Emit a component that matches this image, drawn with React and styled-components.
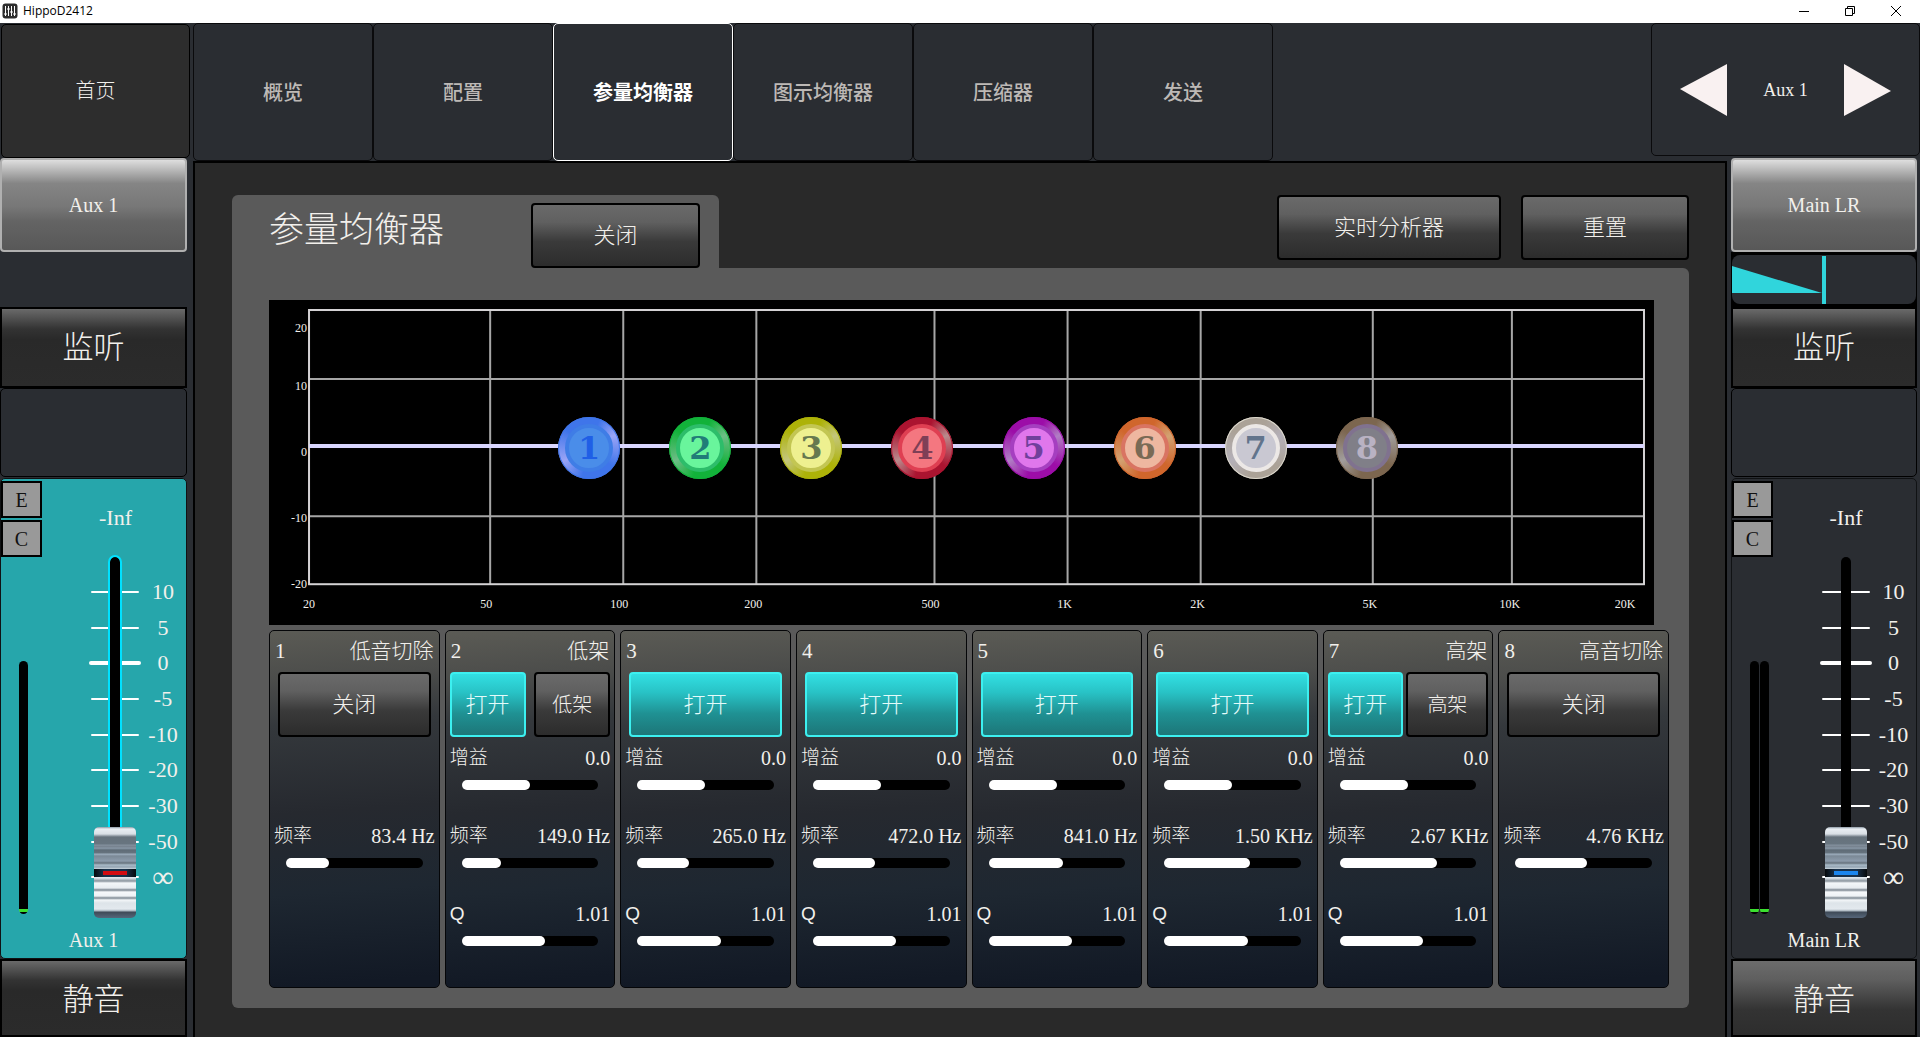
import React, { useState } from "react";
import styled, { createGlobalStyle, css } from "styled-components";

const GlobalStyle = createGlobalStyle`
  *, *::before, *::after { box-sizing: border-box; }
  body {
    margin: 0;
    background: #2a2d32;
    color: #f2f0ec;
    font-family: "Liberation Serif", "Noto Sans CJK SC", serif;
    font-size: 20px;
    font-weight: 300;
    line-height: 24px;
  }
  button, input {
    margin: 0;
    padding: 0;
    color: inherit;
    font: inherit;
  }
`;

const BODY_TEXT = "20px";

/* ---------- window frame ---------- */

const Window = styled.div`
  display: flex;
  flex-direction: column;
  min-height: 100vh;
`;

const TitleBar = styled.header`
  display: flex;
  align-items: center;
  height: 23px;
  padding: 0 7px 2px 2px;
  background: #fff;
  color: #000;
`;

const WindowTitle = styled.h1`
  flex: 1;
  margin: 0 0 0 5px;
  font: 400 12px/16px "Open Sans", "Noto Sans", sans-serif;
`;

const WindowButton = styled.button`
  display: grid;
  place-items: center;
  width: 34px;
  height: 20px;
  margin-left: 12px;
  border: 0;
  background: none;
`;

const Console = styled.div`
  flex: 1;
  display: grid;
  grid-template-columns: 193px minmax(0, 1fr) 76px 193px;
  grid-template-rows: 135px 3px 1fr;
`;

/* ---------- buttons ---------- */

const faces = {
  dark: css`
    border-color: #000;
    background: linear-gradient(#6a6a6a, #606060 28%, #3a3a3a 60%, #2c2c2c);
  `,
  on: css`
    border-color: #3cf0f0;
    background: linear-gradient(#32dfe2, #28c3c6 30%, #1f9193 65%, #1d7678);
    color: #e4fbfa;
  `,
  strip: css`
    border-color: #000;
    border-radius: 0;
    background: linear-gradient(#6a6a6a, #333 26%, #292929 40%, #2b2b2b);
  `,
  stripLit: css`
    border-color: #000;
    border-radius: 0;
    background: linear-gradient(#6c6c6c, #5e5e5e 26%, #333 66%, #2d2d2d);
  `,
  channel: css`
    border-color: #b0b0b0;
    background: linear-gradient(#dedede, #bcbcbc 10%, #858585 26%, #777 52%, #646464 68%, #585858);
  `,
};

const PushButton = styled.button`
  width: ${(p) => p.$width || "auto"};
  height: ${(p) => p.$height || "65px"};
  padding-top: ${(p) => p.$drop || "0"};
  border: 2px solid;
  border-radius: 4px;
  font-size: ${(p) => p.$size || "22px"};
  line-height: 32px;
  ${(p) => faces[p.$face || "dark"]}
`;

/* ---------- top bar ---------- */

const HomeButton = styled.button`
  width: 189px;
  height: 134px;
  margin: 1px 0 0 1px;
  border: 1px solid #000;
  border-radius: 5px;
  background: #2d2d2d;
  font-size: ${BODY_TEXT};
`;

const Tabs = styled.nav`
  grid-area: 1 / 2 / 3 / 3;
  display: flex;
`;

const Tab = styled.button`
  width: 180px;
  height: 138px;
  padding-top: 2px;
  border: 1px solid ${(p) => (p.$active ? "#fff" : "#0a0a0c")};
  border-radius: 5px;
  background: #2a2d32;
  color: ${(p) => (p.$active ? "#fff" : "#bdb9b6")};
  font-size: ${BODY_TEXT};
  font-weight: ${(p) => (p.$active ? 700 : 500)};
`;

const Pager = styled.div`
  grid-area: 1 / 3 / 2 / 5;
  display: flex;
  align-items: center;
  justify-content: space-between;
  height: 133px;
  padding: 0 28px;
  border: 1px solid #0a0a0c;
  border-radius: 5px;
  font-size: 18px;
`;

const PagerButton = styled.button`
  width: 48px;
  height: 54px;
  border: 0;
  background: none;

  svg { display: block; }
`;

/* ---------- channel strips ---------- */

const LeftColumn = styled.aside`
  grid-area: 1 / 1 / 4 / 2;
  display: flex;
  flex-direction: column;
  padding-right: 6px;
`;

const RightColumn = styled.aside`
  grid-area: 2 / 4 / 4 / 5;
  display: flex;
  flex-direction: column;
  padding: 0 3px 0 4px;
`;

const Slot = styled.div`
  height: 55px;
`;

const PanBox = styled.div`
  height: 55px;
  padding: 3px 1px;
  background: #000;

  svg {
    display: block;
    width: 100%;
    height: 49px;
    border-radius: 8px;
    background: #2a2d32;
  }
`;

const EmptyBox = styled.div`
  height: 89px;
  margin-bottom: 1px;
  border: 1px solid #000;
  border-radius: 5px;
`;

const FaderPanel = styled.section`
  flex: 1;
  display: flex;
  flex-direction: column;
  border: 1px solid #101214;
  border-radius: 5px;
  background: ${(p) => (p.$active ? "#26a6ab" : "#2a2d32")};
`;

const FaderHead = styled.div`
  display: grid;
  grid-template-columns: 41px 1fr;
  align-items: center;
  height: 76px;
`;

const Flags = styled.div`
  display: grid;
  gap: 2px;
  padding-top: 2px;
`;

const Flag = styled.button`
  width: 41px;
  height: 37px;
  border: 2px solid #000;
  background: #999;
  color: #111;
  font-size: ${BODY_TEXT};
`;

const Level = styled.output`
  padding-left: 3px;
  text-align: center;
  font-size: 22px;
`;

const FaderBody = styled.div`
  display: grid;
  grid-template-columns: 87px 54px 1fr;
  height: 363px;
`;

const Meters = styled.div`
  grid-area: 1 / 1;
  display: flex;
  gap: 1px;
  align-self: end;
  height: 253px;
  margin: 0 0 4px 18px;
`;

const Meter = styled.div`
  width: 9px;
  border-radius: 5px;
  background: linear-gradient(#000 248px, #3bdf2f 248px, #3bdf2f 251px, #000 251px);
`;

const Track = styled.div`
  grid-area: 1 / 2;
  justify-self: center;
  width: 14px;
  height: 340px;
  border: 2px solid ${(p) => (p.$active ? "#00e1ff" : "transparent")};
  border-radius: 7px;
  background: #000;
  background-clip: padding-box;
`;

const Scale = styled.ul`
  grid-area: 1 / 2 / 2 / 4;
  display: flex;
  flex-direction: column;
  height: 321px;
  margin: 19px 0 0;
  padding: 0;
  list-style: none;
`;

const ScaleMark = styled.li`
  flex: 1;
  display: grid;
  grid-template-columns: 54px 1fr;
  align-items: center;
  text-align: center;

  &::before {
    content: "";
    justify-self: center;
    width: ${(p) => (p.$strong ? "52px" : "48px")};
    height: ${(p) => (p.$strong ? "4px" : "2px")};
    border-radius: 2px;
    background: #fff;
  }
`;

const ScaleText = styled.span`
  padding-right: 2px;
  font-size: ${(p) => (p.$big ? "30px" : "22px")};
`;

const FaderInput = styled.input`
  grid-area: 1 / 2;
  justify-self: center;
  appearance: none;
  writing-mode: vertical-lr;
  direction: rtl;
  width: 42px;
  height: 363px;
  background: none;

  &::-webkit-slider-runnable-track {
    width: 42px;
    height: 100%;
    background: none;
  }

  &::-webkit-slider-thumb {
    appearance: none;
    width: 42px;
    height: 91px;
    border-radius: 5px;
    background:
      linear-gradient(${(p) => p.$lamp}, ${(p) => p.$lamp}) 50% 44px / 24px 4px no-repeat,
      linear-gradient(90deg, #06090c, #19324c 25%, #19324c 75%, #06090c) 0 42px / 100% 8px no-repeat,
      linear-gradient(
        #8d99a5 0, #e9eef3 2px, #d9dfe5 7px, #8b959f 9px,
        #66727c 10px, #687580 17px, #84919e 18px, #74808c 20px,
        #8d9cab 21px, #5f6c77 23px, #66737e 26px, #9fb0bf 27px,
        #7b8996 29px, #8c9bab 34px, #66727d 36px, #a9bac8 38px,
        #93a3b2 40px, #c9d4dd 42px, #dfe6ec 51px, #8a949d 54px,
        #f4f7f9 56px, #e7ecf0 61px, #7b858f 63px, #f6f8fa 65px,
        #eef2f5 69px, #7d8892 71px, #f3f6f8 73px, #dde4e9 76px,
        #e3e9ee 82px, #a7b2bc 84px, #3f4a57 85px, #56667a 91px
      );
  }
`;

const StripName = styled.div`
  padding-top: 10px;
  text-align: center;
  font-size: ${BODY_TEXT};
`;

/* ---------- equalizer page ---------- */

const Main = styled.main`
  grid-area: 3 / 2 / 4 / 4;
  display: flex;
  flex-direction: column;
  padding: 32px 36px 29px 37px;
  border: 2px solid #000;
  border-bottom: 0;
  background: #292929;
`;

const MainHead = styled.div`
  display: flex;
  justify-content: space-between;
  height: 73px;
`;

const TitleTab = styled.div`
  display: flex;
  align-items: flex-end;
  justify-content: space-between;
  width: 487px;
  padding: 0 19px 0 37px;
  border-radius: 6px 6px 0 0;
  background: #5a5a5a;
`;

const PageTitle = styled.h2`
  align-self: center;
  margin: 0;
  padding-bottom: 2px;
  font-size: 35px;
  font-weight: 300;
  line-height: 48px;
`;

const Actions = styled.div`
  display: flex;
  gap: 20px;
`;

const Panel = styled.div`
  flex: 1;
  display: flex;
  flex-direction: column;
  gap: 5px;
  padding: 32px 20px 20px 37px;
  border-radius: 0 6px 6px 6px;
  background: #5a5a5a;
`;

const ChartBox = styled.div`
  position: relative;
  margin-right: 15px;
  background: #000;

  svg {
    display: block;
    width: 100%;
    height: auto;
  }

  text {
    fill: #f2f0ec;
    font-size: 12px;
  }
`;

const BandDot = styled.button`
  position: absolute;
  left: ${(p) => p.$left}%;
  top: 148px;
  width: 62px;
  height: 62px;
  transform: translate(-50%, -50%);
  display: grid;
  place-items: center;
  border: 0;
  border-radius: 50%;
  background: conic-gradient(
    from 20deg,
    ${(p) => p.$rim}, ${(p) => p.$shine} 12%, ${(p) => p.$rim} 30%,
    ${(p) => p.$rim} 48%, ${(p) => p.$shine} 62%, ${(p) => p.$rim} 80%
  );
  box-shadow: inset 0 0 0 1px ${(p) => p.$edge || p.$rim};
`;

const DotFace = styled.span`
  display: grid;
  place-items: center;
  width: 48px;
  height: 48px;
  border: 4px solid ${(p) => p.$ring};
  border-radius: 50%;
  background: ${(p) => p.$face};
  color: ${(p) => p.$ink};
  font: 700 32px/40px "DejaVu Serif", serif;
`;

const Bands = styled.div`
  flex: 1;
  display: grid;
  grid-template-columns: repeat(8, minmax(0, 1fr));
  gap: 5px;
`;

const BandCard = styled.section`
  display: flex;
  flex-direction: column;
  border: 1px solid #050608;
  border-radius: 5px;
  background: linear-gradient(176deg, #5b5b55, #4c4d4b 13%, #34383c 26%, #26292f 50%, #1e2731 72%, #121925 97%);
`;

const BandHead = styled.div`
  display: flex;
  justify-content: space-between;
  padding: 7px 5px 0;
  font-size: 21px;
  line-height: 26px;
`;

const BandButtons = styled.div`
  display: grid;
  grid-template-columns: ${(p) => p.$columns};
  justify-content: space-between;
  margin: 8px ${(p) => (p.$wide ? "8px" : "4px")} 9px;
`;

const Field = styled.div`
  display: grid;
  grid-template-columns: auto 1fr;
  height: 78px;
  padding: 0 4px;
  align-content: start;
  line-height: 24px;
`;

const FieldLabel = styled.label`
  font-size: 19px;
  font-family: ${(p) => (p.$sans ? '"Liberation Sans", sans-serif' : "inherit")};
`;

const FieldValue = styled.output`
  text-align: right;
  font-size: ${BODY_TEXT};
`;

const Range = styled.input`
  grid-column: 1 / 3;
  appearance: none;
  height: 10px;
  margin: 10px 12px 0;
  border-radius: 5px;
  background:
    linear-gradient(#fff, #fff) 0 0 / var(--fill) 100% no-repeat,
    #000;

  &::-webkit-slider-thumb {
    appearance: none;
    width: 10px;
    height: 10px;
    border-radius: 50%;
    background: #fff;
  }
`;

/* ---------- data ---------- */

const TABS = ["概览", "配置", "参量均衡器", "图示均衡器", "压缩器", "发送"];

const MARKS = ["10", "5", "0", "-5", "-10", "-20", "-30", "-50", "∞"];

const BANDS = [
  { kind: "低音切除", on: false, freq: "83.4 Hz", pos: 26 },
  { kind: "低架", on: true, shelf: "低架", columns: "76px 76px", gain: 46, freq: "149.0 Hz", pos: 23, q: 58 },
  { on: true, gain: 46, freq: "265.0 Hz", pos: 33, q: 58 },
  { on: true, gain: 46, freq: "472.0 Hz", pos: 41, q: 58 },
  { on: true, gain: 46, freq: "841.0 Hz", pos: 51, q: 58 },
  { on: true, gain: 46, freq: "1.50 KHz", pos: 60, q: 58 },
  { kind: "高架", on: true, shelf: "高架", columns: "75px 82px", gain: 46, freq: "2.67 KHz", pos: 69, q: 58 },
  { kind: "高音切除", on: false, freq: "4.76 KHz", pos: 49 },
];

const DOTS = [
  { rim: "#3f75ea", shine: "#9aa4f6", ring: "#3f7de6", face: "#4a8de9", ink: "#1f5fe6" },
  { rim: "#12b23a", shine: "#6dbd86", ring: "#2dbd6a", face: "#69f59c", ink: "#217c78" },
  { rim: "#adb208", shine: "#c4c67c", ring: "#c3c653", face: "#eef090", ink: "#66794f" },
  { rim: "#ab1430", shine: "#b98a8c", ring: "#df3f52", face: "#f47780", ink: "#7e3f56" },
  { rim: "#9c0da8", shine: "#b07fc4", ring: "#a53fc0", face: "#e077ec", ink: "#70409c" },
  { rim: "#d0662c", shine: "#d3a272", ring: "#d97462", face: "#eeb7a0", ink: "#7a6a55" },
  { rim: "#aba297", shine: "#b4b0b8", ring: "#ece8e6", face: "#c9c8d2", ink: "#62748c", edge: "#dcd8cc" },
  { rim: "#7c664f", shine: "#a19d9c", ring: "#80728f", face: "#807f88", ink: "#b9b2c3" },
];

const GRID_X = [221, 354, 487, 665, 798, 931, 1103, 1242];
const FREQ_LABELS = [
  [40, "20"], [217, "50"], [350, "100"], [484, "200"], [661, "500"],
  [795, "1K"], [928, "2K"], [1100, "5K"], [1240, "10K"], [1355, "20K"],
];
const DB_LABELS = [[32, "20"], [90, "10"], [156, "0"], [222, "-10"], [288, "-20"]];

/* ---------- parts ---------- */

function AppIcon() {
  return (
    <svg width="16" height="16" viewBox="0 0 16 16" aria-hidden="true">
      <rect x="0.5" y="0.5" width="15" height="15" rx="3" fill="#2d2d2d" />
      <path d="M3.5 3v10M6.5 3v10M9.5 3v10M12.5 3v10" stroke="#fff" strokeWidth="1" />
      <path d="M2.5 11h2M5.5 6h2M8.5 9h2M11.5 11h2" stroke="#fff" strokeWidth="2" />
    </svg>
  );
}

function Fader({ name, active, lamp, meters }) {
  const [level, setLevel] = useState(0);
  return (
    <FaderPanel $active={active} aria-label={name}>
      <FaderHead>
        <Flags>
          <Flag type="button">E</Flag>
          <Flag type="button">C</Flag>
        </Flags>
        <Level>-Inf</Level>
      </FaderHead>
      <FaderBody>
        <Meters>
          {Array.from({ length: meters }, (_, i) => <Meter key={i} />)}
        </Meters>
        <Scale>
          {MARKS.map((mark) => (
            <ScaleMark key={mark} $strong={mark === "0"}>
              <ScaleText $big={mark === "∞"}>{mark}</ScaleText>
            </ScaleMark>
          ))}
        </Scale>
        <Track $active={active} />
        <FaderInput
          type="range"
          aria-label={name}
          $lamp={lamp}
          value={level}
          onChange={(e) => setLevel(Number(e.target.value))}
        />
      </FaderBody>
      <StripName>{name}</StripName>
    </FaderPanel>
  );
}

function SliderField({ id, label, text, start, sans }) {
  const [value, setValue] = useState(start);
  const fill = { "--fill": `calc((100% - 10px) * ${value / 100} + 5px)` };
  return (
    <Field>
      <FieldLabel htmlFor={id} $sans={sans}>{label}</FieldLabel>
      <FieldValue htmlFor={id}>{text}</FieldValue>
      <Range id={id} type="range" value={value} style={fill} onChange={(e) => setValue(Number(e.target.value))} />
    </Field>
  );
}

function Band({ number, band }) {
  const full = band.gain !== undefined;
  return (
    <BandCard>
      <BandHead>
        <span>{number}</span>
        <span>{band.kind}</span>
      </BandHead>
      <BandButtons $wide={!band.shelf} $columns={band.columns || "1fr"}>
        <PushButton type="button" $face={band.on ? "on" : "dark"}>{band.on ? "打开" : "关闭"}</PushButton>
        {band.shelf && <PushButton type="button" $size="20px">{band.shelf}</PushButton>}
      </BandButtons>
      {full ? <SliderField id={`gain-${number}`} label="增益" text="0.0" start={band.gain} /> : <Field />}
      <SliderField id={`freq-${number}`} label="频率" text={band.freq} start={band.pos} />
      {full && <SliderField id={`q-${number}`} label="Q" text="1.01" start={band.q} sans />}
    </BandCard>
  );
}

function Chart() {
  return (
    <ChartBox>
      <svg viewBox="0 0 1384 325" role="img" aria-label="参量均衡器">
        <g stroke="#a6a6a6" strokeWidth="2">
          {GRID_X.map((x) => <path key={x} d={`M${x} 10V284`} />)}
          <path d="M40 79H1374M40 216H1374" />
        </g>
        <rect x="40" y="10" width="1334" height="274" fill="none" stroke="#d4d2d4" strokeWidth="2" />
        <path d="M40 146H1374" stroke="#d9d6ff" strokeWidth="4" />
        {DB_LABELS.map(([y, label]) => (
          <text key={label} x="38" y={y} textAnchor="end">{label}</text>
        ))}
        {FREQ_LABELS.map(([x, label]) => (
          <text key={label} x={x} y="308" textAnchor="middle">{label}</text>
        ))}
      </svg>
      {DOTS.map((dot, i) => (
        <BandDot
          key={dot.rim}
          type="button"
          $left={(320 + 111 * i) / 13.84}
          $rim={dot.rim}
          $shine={dot.shine}
          $edge={dot.edge}
        >
          <DotFace $ring={dot.ring} $face={dot.face} $ink={dot.ink}>{i + 1}</DotFace>
        </BandDot>
      ))}
    </ChartBox>
  );
}

export default function App() {
  const [tab, setTab] = useState(2);
  return (
    <Window>
      <GlobalStyle />
      <TitleBar>
        <AppIcon />
        <WindowTitle>HippoD2412</WindowTitle>
        <WindowButton type="button" aria-label="最小化">
          <svg width="12" height="12" viewBox="0 0 12 12"><path d="M1 6.5h10" stroke="#000" /></svg>
        </WindowButton>
        <WindowButton type="button" aria-label="还原">
          <svg width="12" height="12" viewBox="0 0 12 12" fill="none" stroke="#000">
            <path d="M1.5 3.5h7v7h-7zM3.5 3.5v-2h7v7h-2" />
          </svg>
        </WindowButton>
        <WindowButton type="button" aria-label="关闭">
          <svg width="12" height="12" viewBox="0 0 12 12"><path d="M1 1l10 10M11 1L1 11" stroke="#000" /></svg>
        </WindowButton>
      </TitleBar>

      <Console>
        <LeftColumn>
          <HomeButton type="button">首页</HomeButton>
          <PushButton type="button" $face="channel" $height="94px" $size="20px">Aux 1</PushButton>
          <Slot />
          <PushButton type="button" $face="strip" $height="81px" $size="31px">监听</PushButton>
          <EmptyBox />
          <Fader name="Aux 1" active lamp="#d40c12" meters={1} />
          <PushButton type="button" $face="strip" $height="78px" $size="31px" $drop="4px">静音</PushButton>
        </LeftColumn>

        <Tabs>
          {TABS.map((name, i) => (
            <Tab key={name} type="button" $active={i === tab} onClick={() => setTab(i)}>{name}</Tab>
          ))}
        </Tabs>

        <Pager>
          <PagerButton type="button" aria-label="上一个">
            <svg width="48" height="54" viewBox="0 0 48 54"><path d="M47 1V53L0 26z" fill="#f9f1f1" /></svg>
          </PagerButton>
          <span>Aux 1</span>
          <PagerButton type="button" aria-label="下一个">
            <svg width="48" height="54" viewBox="0 0 48 54"><path d="M1 1V53L48 28z" fill="#f9f1f1" /></svg>
          </PagerButton>
        </Pager>

        <Main>
          <MainHead>
            <TitleTab>
              <PageTitle>参量均衡器</PageTitle>
              <PushButton type="button" $width="169px">关闭</PushButton>
            </TitleTab>
            <Actions>
              <PushButton type="button" $width="224px">实时分析器</PushButton>
              <PushButton type="button" $width="168px">重置</PushButton>
            </Actions>
          </MainHead>
          <Panel>
            <Chart />
            <Bands>
              {BANDS.map((band, i) => <Band key={i} number={i + 1} band={band} />)}
            </Bands>
          </Panel>
        </Main>

        <RightColumn>
          <PushButton type="button" $face="channel" $height="94px" $size="20px">Main LR</PushButton>
          <PanBox>
            <svg viewBox="0 0 184 49" preserveAspectRatio="none" aria-hidden="true">
              <path d="M0 11L90 38H0z" fill="#30d5dc" />
              <path d="M92 1V49" stroke="#30d5dc" strokeWidth="4" />
            </svg>
          </PanBox>
          <PushButton type="button" $face="strip" $height="81px" $size="31px">监听</PushButton>
          <EmptyBox />
          <Fader name="Main LR" lamp="#1c86ee" meters={2} />
          <PushButton type="button" $face="stripLit" $height="78px" $size="31px" $drop="4px">静音</PushButton>
        </RightColumn>
      </Console>
    </Window>
  );
}
